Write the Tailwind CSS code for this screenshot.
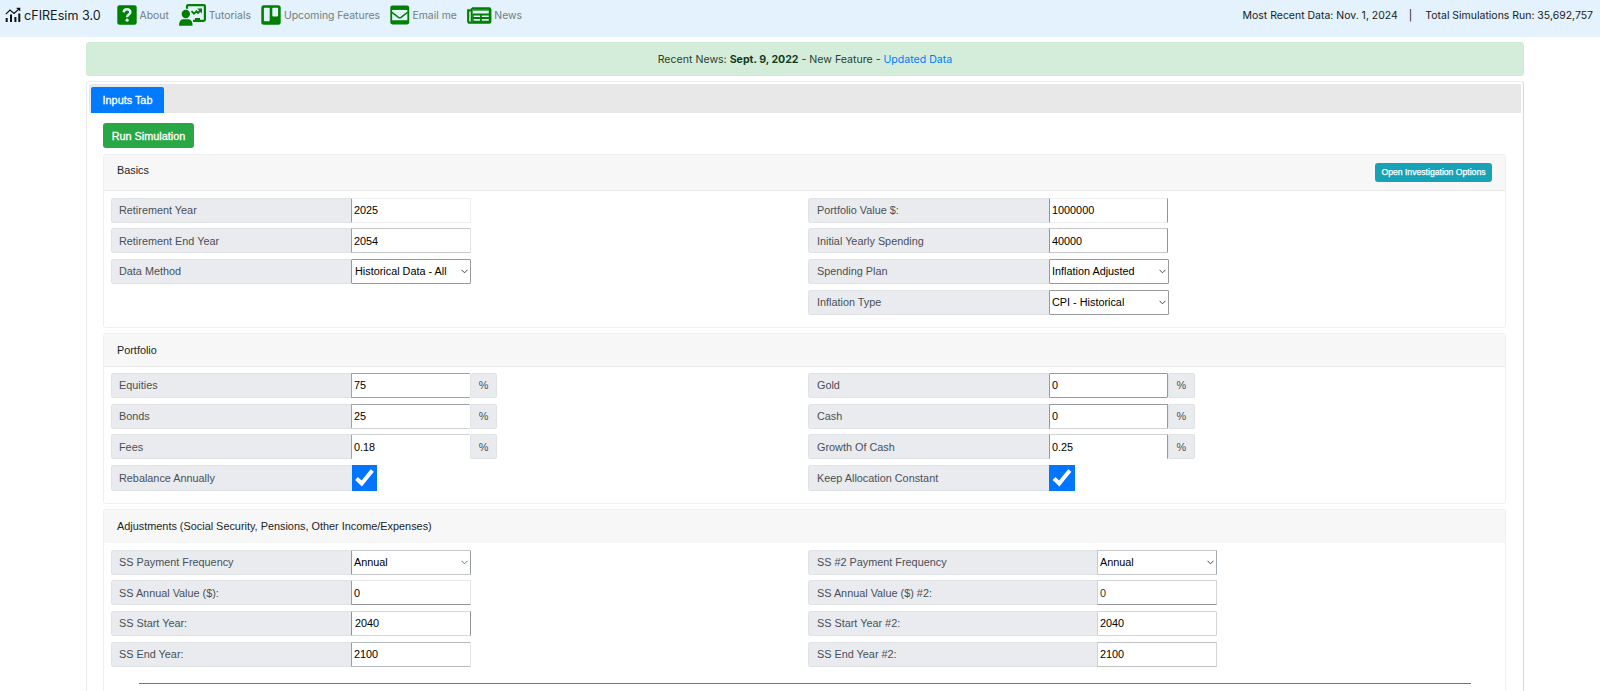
<!DOCTYPE html>
<html lang="en">
<head>
  <meta charset="UTF-8">
  <meta name="viewport" content="width=device-width, initial-scale=1">
  <title>cFIREsim 3.0</title>
  <script src="https://cdn.jsdelivr.net/npm/@tailwindcss/browser@4"></script>
</head>
<body class="bg-white text-[#212529] text-[10.85px] leading-4 font-['Liberation_Sans',Arial,sans-serif] h-[691px] overflow-hidden">
  <!-- Navbar -->
  <nav class="h-[36.5px] bg-[#e3f2fd] flex items-start justify-between pl-[5px] pr-[7px] font-['Inter',sans-serif] text-[10.42px]">
    <div class="flex items-center h-[30px] text-[#737b80]">
      <a href="#" class="flex items-center w-[112px] gap-[3px] text-[12.6px] text-[#181a1c]">
        <svg class="w-4 h-4" viewBox="0 0 16 16" fill="none" stroke="#111" stroke-width="1.2">
          <path d="M.8 7.2 5 3l4 3.4L14.5 1.5M11.7 1.3h3v2.8"/>
          <path d="M1.7 15v-4M6 15V7.6M10.4 15v-5M14.3 15V6.5" stroke-width="2"/>
        </svg>
        <span class="pt-[1px]">cFIREsim 3.0</span>
      </a>
      <div class="flex items-center gap-[10.5px]">
        <a href="#" class="flex items-center gap-[2.5px]">
          <svg class="w-5 h-5" viewBox="0 0 20 20">
            <rect x=".3" y=".3" width="19.4" height="19.4" rx="2.2" fill="green"/>
            <path d="M6.7 7.3C7 3.4 13.3 3.4 13.3 7.2c0 2.4-3.2 2.4-3.2 5" fill="none" stroke="#e3f2fd" stroke-width="2.5"/>
            <circle cx="10.1" cy="15.2" r="1.6" fill="#e3f2fd"/>
          </svg>
          <span class="pt-[1px]">About</span>
        </a>
        <a href="#" class="flex items-center gap-[2.5px]">
          <svg class="w-[27px] h-[22px]" viewBox="0 0 27 22" fill="green">
            <path d="M8 4.8V2.2Q8 1.100 9.200 1.100H24.700Q25.900 1.100 25.900 2.300V15.600Q25.900 16.800 24.700 16.800H14" fill="none" stroke="green" stroke-width="2.200"/>
            <circle cx="6.800" cy="10" r="4.200"/>
            <path d="M0 21.700C0 17.600 1.500 15.600 4 15.200H9.600c2.500.4 4 2.400 4 6.500Z"/>
            <path d="M12.500 7.200 15 9.700 17.500 7.400 19 9l3-3" fill="none" stroke="green" stroke-width="1.900"/>
            <path d="M18.200 4.600h4.800v4.800Z"/>
            <path d="M16 14h5v3h-5Z"/>
          </svg>
          <span class="pt-[1px]">Tutorials</span>
        </a>
        <a href="#" class="flex items-center gap-[2.5px]">
          <svg class="w-5 h-5" viewBox="0 0 20 20">
            <rect x=".3" y=".3" width="19.4" height="19.4" rx="2.5" fill="green"/>
            <rect x="2.9" y="2.8" width="5.8" height="13.4" rx=".8" fill="#e3f2fd"/>
            <rect x="11.3" y="2.8" width="5.8" height="8.6" rx=".8" fill="#e3f2fd"/>
          </svg>
          <span class="pt-[1px]">Upcoming Features</span>
        </a>
        <a href="#" class="flex items-center gap-[2.5px]">
          <svg class="w-[19.5px] h-5" viewBox="0 0 20 20">
            <rect x=".3" y=".3" width="19.4" height="19.4" rx="2.2" fill="green"/>
            <path d="M2.200 4.800h15.600v10.600H2.200Z" fill="#e3f2fd"/>
            <path d="M2 7.300l6.700 5.100q1.300.9 2.600 0L18 7.300" fill="none" stroke="green" stroke-width="1.500"/>
          </svg>
          <span class="pt-[1px]">Email me</span>
        </a>
        <a href="#" class="flex items-center gap-[2.5px]">
          <svg class="w-[24.5px] h-[17px]" viewBox="0 0 25 17">
            <path d="M5 1.200h17.600q1.200 0 1.200 1.200v12.200q0 1.200-1.200 1.200H3Q1.200 15.800 1.200 14V3.200H4" fill="none" stroke="green" stroke-width="2.200"/>
            <path d="M4.800 1V15" stroke="green" stroke-width="2"/>
            <path d="M6 7.500H23M6 11.100H23M6 14.700H23" stroke="green" stroke-width="1.900"/>
            <path d="M14.200 7v8" stroke="green" stroke-width="1.800"/>
            <path d="M6 2.800H23" stroke="green" stroke-width="1.400"/>
            <path d="M6.200 7V15M22.800 2V15" stroke="green" stroke-width="1.200"/>
          </svg>
          <span class="pt-[1px]">News</span>
        </a>
      </div>
    </div>
    <div class="flex items-center h-[31px] text-[10.48px] text-[#181a1c]">
      <span>Most Recent Data: Nov. 1, 2024</span>
      <span class="ml-[11px] mr-[13px]">|</span>
      <span>Total Simulations Run: 35,692,757</span>
    </div>
  </nav>

  <!-- Page Content -->
  <main class="ml-[86px] w-[1438px] pt-[5.5px]">
    <div class="h-[34px] pt-[1px] rounded-[3px] bg-[#d4edda] border border-[#cdead4] flex items-center justify-center font-['Inter',sans-serif] text-[10.58px] text-[#28422e]">
      <p>Recent News: <b class="text-[#133c1c]">Sept. 9, 2022</b> - New Feature - <a href="#" class="text-[#007bff]">Updated Data</a></p>
    </div>

    <div class="mt-[5px] h-[610px] overflow-hidden border border-b-0 border-[#ececee] border-r-[#d5d8dc] rounded-t-[3px] px-[2px] pt-[2px]">
      <div class="h-[29px] bg-[#e8e8e8] rounded-l-[3px] flex items-end pl-[2px]">
        <button class="w-[73px] h-[26px] bg-[#007bff] text-white rounded-t-[2px] [-webkit-text-stroke:0.3px_white]">Inputs Tab</button>
      </div>

      <div class="pl-[14px] pr-[15px] pt-[10px]">
        <button class="block w-[91px] h-[25px] bg-[#28a745] text-white rounded-[3px] [-webkit-text-stroke:0.3px_white]">Run Simulation</button>

        <!-- Basics -->
        <section class="mt-[5.5px] h-[174px] border border-[#f0f0f0] rounded-[3px]">
          <header class="h-[36px] bg-[#f7f7f7] border-b border-[#e8e8e8] flex justify-between pl-[13px] pr-[13px]">
            <span class="pt-[7px]">Basics</span>
            <button class="mt-[8px] w-[117px] h-[19px] bg-[#17a2b8] text-white text-[8.65px] rounded-[3px] [-webkit-text-stroke:0.25px_white]">Open Investigation Options</button>
          </header>
          <div class="grid grid-cols-[697px_1fr] pl-[7px] pt-[7px] text-[#495057]">
            <div class="flex flex-col gap-[5.7px]">
              <div class="flex h-[25px]">
                <label class="w-[240px] pl-[7px] flex items-center bg-[#e9ebee] border border-r-0 border-[#e0e3e6] rounded-l-[3px]">Retirement Year</label>
                <input class="w-[120px] pl-[2px] text-black border border-[#eceeef] border-l-[#9a9fa3] rounded-[1px]" value="2025">
              </div>
              <div class="flex h-[25px]">
                <label class="w-[240px] pl-[7px] flex items-center bg-[#e9ebee] border border-r-0 border-[#e0e3e6] rounded-l-[3px]">Retirement End Year</label>
                <input class="w-[120px] pl-[2px] text-black border border-[#c4c8cb] border-l-[#9a9fa3] border-r-[#e4e6e8] rounded-[1px]" value="2054">
              </div>
              <div class="flex h-[25px]">
                <label class="w-[240px] pl-[7px] flex items-center bg-[#e9ebee] border border-r-0 border-[#e0e3e6] rounded-l-[3px]">Data Method</label>
                <div class="w-[120px] pl-[3px] pr-[2px] flex items-center justify-between text-black border border-[#959a9e] rounded-[1px]">Historical Data - All
                  <svg class="w-[7px] h-[5px]" viewBox="0 0 7 5" fill="none" stroke="#444"><path d="M.5.8l3 3 3-3"/></svg>
                </div>
              </div>
            </div>
            <div class="flex flex-col gap-[5.7px]">
              <div class="flex h-[25px]">
                <label class="w-[241px] pl-[8px] flex items-center bg-[#e9ebee] border border-r-0 border-[#e0e3e6] rounded-l-[3px]">Portfolio Value $:</label>
                <input class="w-[119px] pl-[2px] text-black border border-[#eceeef] border-x-[#8f9498] rounded-[1px]" value="1000000">
              </div>
              <div class="flex h-[25px]">
                <label class="w-[241px] pl-[8px] flex items-center bg-[#e9ebee] border border-r-0 border-[#e0e3e6] rounded-l-[3px]">Initial Yearly Spending</label>
                <input class="w-[119px] pl-[2px] text-black border border-[#c4c8cb] border-x-[#8f9498] rounded-[1px]" value="40000">
              </div>
              <div class="flex h-[25px]">
                <label class="w-[241px] pl-[8px] flex items-center bg-[#e9ebee] border border-r-0 border-[#e0e3e6] rounded-l-[3px]">Spending Plan</label>
                <div class="w-[120px] pl-[2px] pr-[2px] flex items-center justify-between text-black border border-[#959a9e] rounded-[1px]">Inflation Adjusted
                  <svg class="w-[7px] h-[5px]" viewBox="0 0 7 5" fill="none" stroke="#444"><path d="M.5.8l3 3 3-3"/></svg>
                </div>
              </div>
              <div class="flex h-[25px]">
                <label class="w-[241px] pl-[8px] flex items-center bg-[#e9ebee] border border-r-0 border-[#e0e3e6] rounded-l-[3px]">Inflation Type</label>
                <div class="w-[120px] pl-[2px] pr-[2px] flex items-center justify-between text-black border border-[#959a9e] rounded-[1px]">CPI - Historical
                  <svg class="w-[7px] h-[5px]" viewBox="0 0 7 5" fill="none" stroke="#444"><path d="M.5.8l3 3 3-3"/></svg>
                </div>
              </div>
            </div>
          </div>
        </section>

        <!-- Portfolio -->
        <section class="mt-[5px] h-[171px] border border-[#f0f0f0] rounded-[3px]">
          <header class="h-[33px] bg-[#f7f7f7] border-b border-[#e8e8e8] flex items-center pl-[13px]">Portfolio</header>
          <div class="grid grid-cols-[697px_1fr] pl-[7px] pt-[6.4px] text-[#495057]">
            <div class="flex flex-col gap-[5.7px]">
              <div class="flex h-[25px]">
                <label class="w-[240px] pl-[7px] flex items-center bg-[#e9ebee] border border-r-0 border-[#e0e3e6] rounded-l-[3px]">Equities</label>
                <input class="w-[119px] pl-[2px] text-black border border-[#9fa4a8] border-r-0 rounded-[1px]" value="75">
                <span class="w-[27px] flex items-center justify-center bg-[#e9ebee] border border-[#e0e3e6] rounded-[2px]">%</span>
              </div>
              <div class="flex h-[25px]">
                <label class="w-[240px] pl-[7px] flex items-center bg-[#e9ebee] border border-r-0 border-[#e0e3e6] rounded-l-[3px]">Bonds</label>
                <input class="w-[119px] pl-[2px] text-black border border-[#9fa4a8] border-r-0 border-b-[#ced1d6] rounded-[1px]" value="25">
                <span class="w-[27px] flex items-center justify-center bg-[#e9ebee] border border-[#e0e3e6] rounded-[2px]">%</span>
              </div>
              <div class="flex h-[25px]">
                <label class="w-[240px] pl-[7px] flex items-center bg-[#e9ebee] border border-r-0 border-[#e0e3e6] rounded-l-[3px]">Fees</label>
                <input class="w-[119px] pl-[2px] text-black border border-[#9fa4a8] border-r-0 border-b-0 border-t-[#ced1d6] rounded-[1px]" value="0.18">
                <span class="w-[27px] flex items-center justify-center bg-[#e9ebee] border border-[#e0e3e6] rounded-[2px]">%</span>
              </div>
              <div class="flex h-[26px]">
                <label class="w-[241px] pl-[7px] flex items-center bg-[#e9ebee] border border-r-0 border-[#e0e3e6] rounded-l-[3px]">Rebalance Annually</label>
                <svg class="w-[25px] h-[26px] bg-[#0075ff]" viewBox="0 0 25 26" fill="none" stroke="white" stroke-width="4"><path d="M4.5 13.5l5.2 5L20.3 5.5"/></svg>
              </div>
            </div>
            <div class="flex flex-col gap-[5.7px]">
              <div class="flex h-[25px]">
                <label class="w-[241px] pl-[8px] flex items-center bg-[#e9ebee] border border-r-0 border-[#e0e3e6] rounded-l-[3px]">Gold</label>
                <input class="w-[119px] pl-[2px] text-black border border-[#959a9e] rounded-[1px]" value="0">
                <span class="w-[26.5px] flex items-center justify-center bg-[#e9ebee] border border-[#e0e3e6] rounded-[2px]">%</span>
              </div>
              <div class="flex h-[25px]">
                <label class="w-[241px] pl-[8px] flex items-center bg-[#e9ebee] border border-r-0 border-[#e0e3e6] rounded-l-[3px]">Cash</label>
                <input class="w-[119px] pl-[2px] text-black border border-[#959a9e] border-b-[#ced1d6] rounded-[1px]" value="0">
                <span class="w-[26.5px] flex items-center justify-center bg-[#e9ebee] border border-[#e0e3e6] rounded-[2px]">%</span>
              </div>
              <div class="flex h-[25px]">
                <label class="w-[241px] pl-[8px] flex items-center bg-[#e9ebee] border border-r-0 border-[#e0e3e6] rounded-l-[3px]">Growth Of Cash</label>
                <input class="w-[119px] pl-[2px] text-black border border-[#959a9e] border-b-0 border-t-[#ced1d6] rounded-[1px]" value="0.25">
                <span class="w-[26.5px] flex items-center justify-center bg-[#e9ebee] border border-[#e0e3e6] rounded-[2px]">%</span>
              </div>
              <div class="flex h-[26px]">
                <label class="w-[241px] pl-[8px] flex items-center bg-[#e9ebee] border border-r-0 border-[#e0e3e6] rounded-l-[3px]">Keep Allocation Constant</label>
                <svg class="w-[26px] h-[26px] bg-[#0075ff]" viewBox="0 0 26 26" fill="none" stroke="white" stroke-width="4"><path d="M5 13.5l5.2 5L20.800 5.500"/></svg>
              </div>
            </div>
          </div>
        </section>

        <!-- Adjustments -->
        <section class="mt-[5px] h-[182px] border border-b-0 border-[#f0f0f0] rounded-t-[3px]">
          <header class="h-[33px] bg-[#f7f7f7] flex items-center pl-[13px] text-[10.88px]">Adjustments (Social Security, Pensions, Other Income/Expenses)</header>
          <div class="grid grid-cols-[697px_1fr] pl-[7px] pt-[7px] text-[#495057]">
            <div class="flex flex-col gap-[5.7px]">
              <div class="flex h-[25px]">
                <label class="w-[240px] pl-[7px] flex items-center bg-[#e9ebee] border border-r-0 border-[#e0e3e6] rounded-l-[3px]">SS Payment Frequency</label>
                <div class="w-[120px] pl-[2px] pr-[2px] flex items-center justify-between text-black border border-[#c4c8cb] border-x-[#959a9e] rounded-[1px]">Annual
                  <svg class="w-[7px] h-[5px]" viewBox="0 0 7 5" fill="none" stroke="#777"><path d="M.5.8l3 3 3-3"/></svg>
                </div>
              </div>
              <div class="flex h-[25px]">
                <label class="w-[240px] pl-[7px] flex items-center bg-[#e9ebee] border border-r-0 border-[#e0e3e6] rounded-l-[3px]">SS Annual Value ($):</label>
                <input class="w-[120px] pl-[2px] text-black border border-[#e4e6e8] border-l-[#9a9fa3] border-b-[#8f9498] rounded-[1px]" value="0">
              </div>
              <div class="flex h-[25px]">
                <label class="w-[240px] pl-[7px] flex items-center bg-[#e9ebee] border border-r-0 border-[#e0e3e6] rounded-l-[3px]">SS Start Year:</label>
                <input class="w-[120px] pl-[3px] text-black border border-[#d4d8dc] border-x-[#8f9498] rounded-[1px]" value="2040">
              </div>
              <div class="flex h-[25px]">
                <label class="w-[240px] pl-[7px] flex items-center bg-[#e9ebee] border border-r-0 border-[#e0e3e6] rounded-l-[3px]">SS End Year:</label>
                <input class="w-[120px] pl-[2px] text-black border border-[#b4babd] border-l-[#9a9fa3] border-r-[#e4e6e8] rounded-[1px]" value="2100">
              </div>
            </div>
            <div class="flex flex-col gap-[5.7px]">
              <div class="flex h-[25px]">
                <label class="w-[289px] pl-[8px] flex items-center bg-[#e9ebee] border border-r-0 border-[#e0e3e6] rounded-l-[3px]">SS #2 Payment Frequency</label>
                <div class="w-[120px] pl-[2px] pr-[2px] flex items-center justify-between text-black border border-[#c4c8cb] border-r-[#a4aaae] rounded-[1px]">Annual
                  <svg class="w-[7px] h-[5px]" viewBox="0 0 7 5" fill="none" stroke="#444"><path d="M.5.8l3 3 3-3"/></svg>
                </div>
              </div>
              <div class="flex h-[25px]">
                <label class="w-[289px] pl-[8px] flex items-center bg-[#e9ebee] border border-r-0 border-[#e0e3e6] rounded-l-[3px]">SS Annual Value ($) #2:</label>
                <input class="w-[119.5px] pl-[2px] text-[#333] border border-[#d0d4d8] border-b-[#8f9498] rounded-[1px]" value="0">
              </div>
              <div class="flex h-[25px]">
                <label class="w-[289px] pl-[8px] flex items-center bg-[#e9ebee] border border-r-0 border-[#e0e3e6] rounded-l-[3px]">SS Start Year #2:</label>
                <input class="w-[119.5px] pl-[2px] text-black border border-[#d0d4d8] rounded-[1px]" value="2040">
              </div>
              <div class="flex h-[25px]">
                <label class="w-[289px] pl-[8px] flex items-center bg-[#e9ebee] border border-r-0 border-[#e0e3e6] rounded-l-[3px]">SS End Year #2:</label>
                <input class="w-[119.5px] pl-[2px] text-black border border-[#bcc2c6] border-x-[#d0d4d8] rounded-[1px]" value="2100">
              </div>
            </div>
          </div>
          <hr class="mt-[16px] ml-[35px] mr-[34px] border-t border-[#6f767c]">
        </section>
      </div>
    </div>
  </main>
</body>
</html>
